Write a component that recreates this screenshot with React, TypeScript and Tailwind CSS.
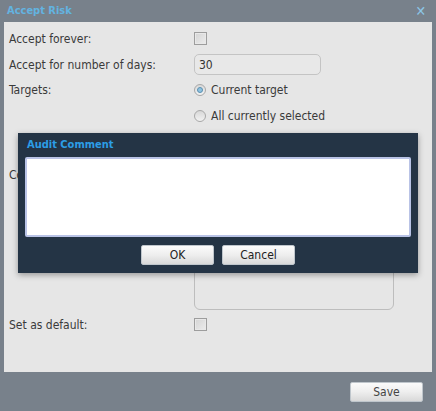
import React from "react";

function Checkbox() {
  return (
    <span className="block h-[13px] w-[13px] border border-[#9d9d9d] bg-gradient-to-br from-[#d4d4d4] to-[#ececec] shadow-[inset_0_0_0_1px_#e8e8e8]" />
  );
}

function Radio({ checked }: { checked?: boolean }) {
  return (
    <span className="flex h-[12px] w-[12px] items-center justify-center rounded-full border border-[#a8a8a8] bg-gradient-to-b from-[#d8d8d8] to-[#f2f2f2]">
      {checked && (
        <span className="block h-[6px] w-[6px] rounded-full border border-[#5a8fb0] bg-[#8fc3e0]" />
      )}
    </span>
  );
}

function Button({ label, className = "" }: { label: string; className?: string }) {
  return (
    <button
      className={`flex h-[20px] items-center justify-center rounded-[2px] border border-[#bfc6cc] bg-gradient-to-b from-[#fbfbfb] via-[#eeeeee] to-[#d9d9d9] text-[12px] text-[#222] ${className}`}
    >
      {label}
    </button>
  );
}

export default function App() {
  return (
    <div
      className="relative flex h-[411px] w-[436px] flex-col bg-[#78818b] text-[12px] text-[#3a3a3a]"
      style={{ fontFamily: "Tahoma, 'DejaVu Sans Condensed', 'Liberation Sans', sans-serif" }}
    >
      <div className="flex h-[22px] items-center justify-between pl-[7px] pr-[10px]">
        <span className="text-[11px] font-bold text-[#63b3e0]">Accept Risk</span>
        <span className="text-[14px] font-bold leading-none text-[#8cc6e6]">✕</span>
      </div>

      <div className="mx-[4px] flex h-[350px] flex-col bg-[#e6e6e6] pl-[5px]">
        <div className="mt-[10px] flex h-[13px] items-center">
          <span className="w-[185px]">Accept forever:</span>
          <Checkbox />
        </div>
        <div className="mt-[9px] flex h-[21px] items-center">
          <span className="w-[185px]">Accept for number of days:</span>
          <div className="flex h-[21px] w-[127px] items-center rounded-[5px] border border-[#c4c4c4] bg-[#e8e8e8] px-[4px] text-[#333]">
            30
          </div>
        </div>
        <div className="mt-[5px] flex h-[20px] items-center">
          <span className="w-[185px]">Targets:</span>
          <Radio checked />
          <span className="ml-[5px]">Current target</span>
        </div>
        <div className="mt-[6px] flex h-[20px] items-center">
          <span className="w-[185px]" />
          <Radio />
          <span className="ml-[5px]">All currently selected</span>
        </div>
        <div className="mt-[10px] flex h-[174px] items-start">
          <span className="mt-[30px] w-[185px]">Comment:</span>
          <div className="h-[174px] w-[200px] rounded-[6px] border border-[#bdbdbd] bg-[#e6e6e6]" />
        </div>
        <div className="mt-[8px] flex h-[13px] items-center">
          <span className="w-[185px]">Set as default:</span>
          <Checkbox />
        </div>
      </div>

      <div className="flex flex-1 items-start justify-end pr-[13px] pt-[10px]">
        <Button label="Save" className="w-[73px] text-[#444]" />
      </div>

      <div className="absolute left-[18px] top-[133px] flex h-[140px] w-[400px] flex-col bg-[#243445] px-[7px] shadow-[0_2px_6px_rgba(0,0,0,0.35)]">
        <div className="flex h-[24px] items-center pl-[2px] text-[11px] font-bold text-[#2c9de6]">
          Audit Comment
        </div>
        <div className="h-[80px] w-[386px] rounded-[2px] border-2 border-[#b9c3e6] bg-white" />
        <div className="mt-[8px] flex justify-center gap-[8px]">
          <Button label="OK" className="w-[73px]" />
          <Button label="Cancel" className="w-[73px]" />
        </div>
      </div>
    </div>
  );
}
